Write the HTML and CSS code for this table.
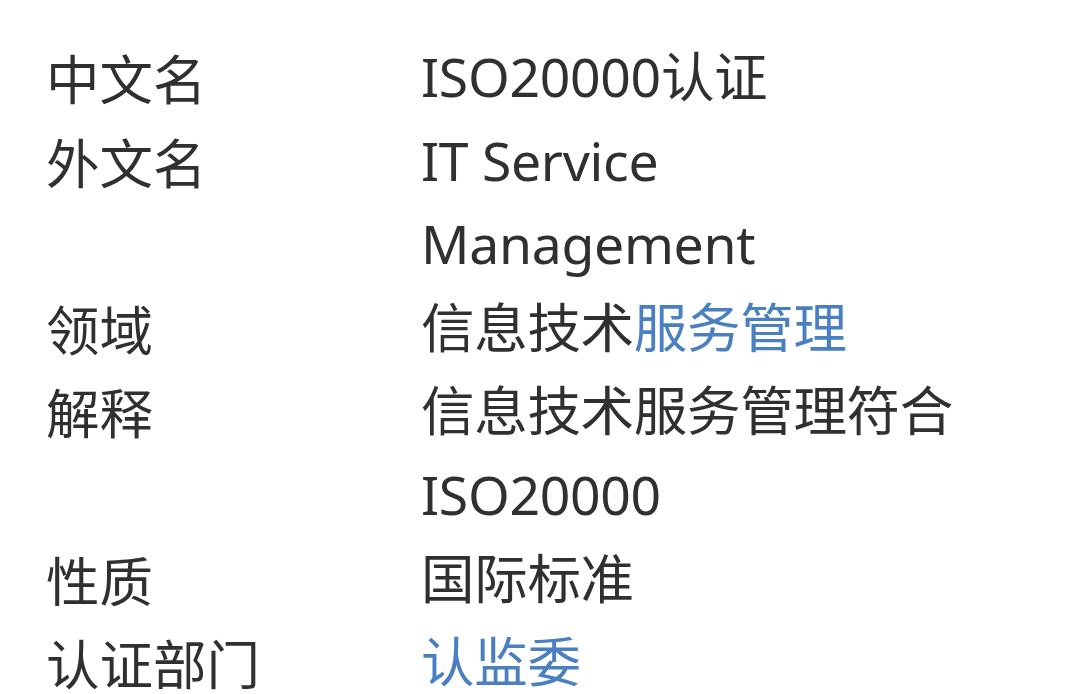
FILE: index.html
```html
<!DOCTYPE html>
<html lang="zh-CN">
<head>
<meta charset="utf-8">
<link rel="stylesheet" href="styles.css">
</head>
<body>
<dl class="info">
  <dt class="label">中文名</dt>
  <dd class="value">ISO20000认证</dd>
  <dt class="label">外文名</dt>
  <dd class="value">IT Service Management</dd>
  <dt class="label">领域</dt>
  <dd class="value">信息技术<span class="link">服务管理</span></dd>
  <dt class="label">解释</dt>
  <dd class="value">信息技术服务管理符合ISO20000</dd>
  <dt class="label">性质</dt>
  <dd class="value">国际标准</dd>
  <dt class="label">认证部门</dt>
  <dd class="value"><span class="link">认监委</span></dd>
</dl>
</body>
</html>
```
FILE: styles.css
```css
html, body {
  margin: 0;
  padding: 0;
  background: #ffffff;
}
body {
  width: 1080px;
  height: 694px;
  overflow: hidden;
  font-family: "Noto Sans", "Noto Sans CJK SC", sans-serif;
  color: #303030;
}
.info {
  margin: 0;
  padding: 35px 0 0 46px;
  display: grid;
  grid-template-columns: 375px 560px;
  font-size: 53.5px;
  line-height: 83.6px;
}
.label, .value {
  margin: 0;
}
.label {
  font-family: "Noto Sans CJK SC", sans-serif;
}
.value {
  letter-spacing: -0.3px;
}
.link {
  color: #4a7fc1;
}
```
